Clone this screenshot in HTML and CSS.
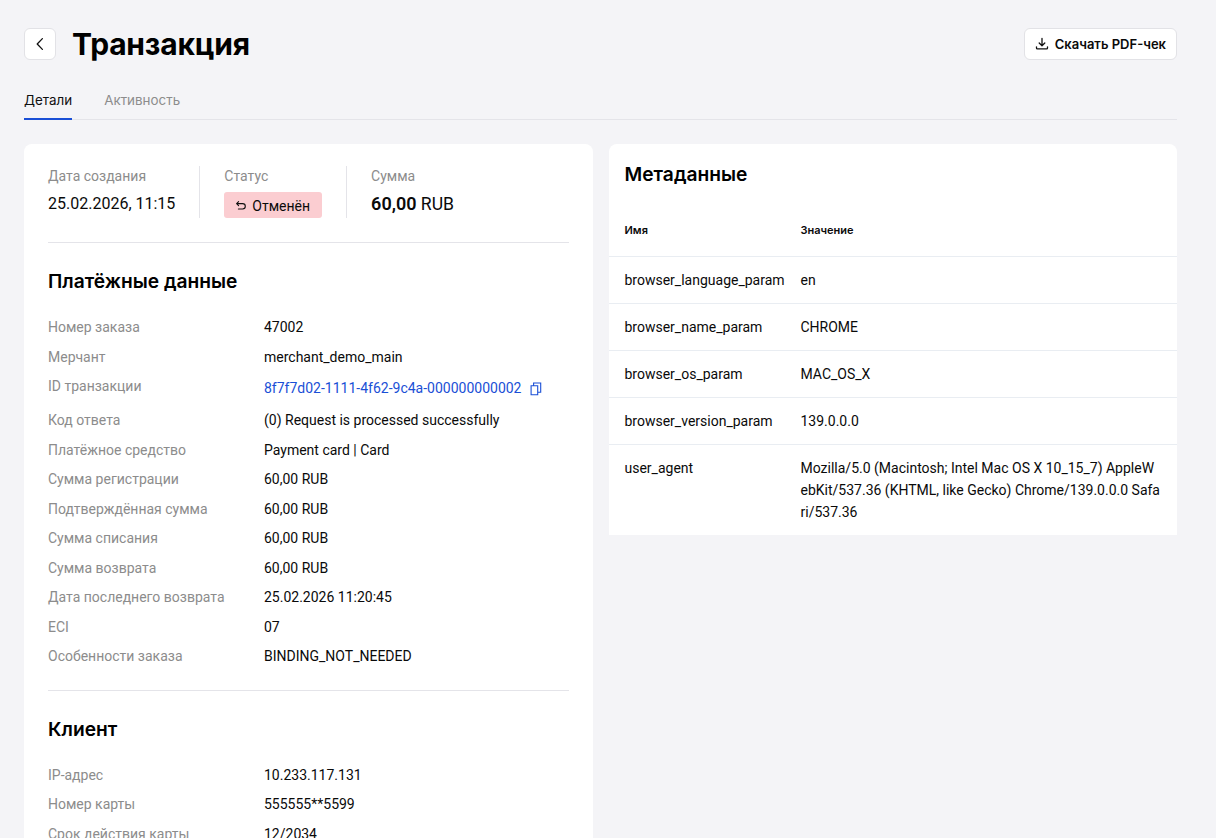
FILE: index.html
```html
<!DOCTYPE html>
<html lang="ru">
<head>
    <meta charset="UTF-8">
    <title>Транзакция</title>
    <meta name="viewport" content="width=device-width, initial-scale=1">
    <link rel="stylesheet" href="styles.css">
</head>
<body>
    <div class="page">
        <header class="page-head">
            <div class="head-left">
                <button class="back-btn" type="button" aria-label="Назад">
                    <svg width="16" height="16" viewBox="0 0 16 16" fill="none"><path d="M10.4 2.6 5.2 8l5.2 5.4" stroke="#111" stroke-width="1.3" stroke-linecap="round" stroke-linejoin="round"/></svg>
                </button>
                <h1>Транзакция</h1>
            </div>
            <button class="pdf-btn" type="button">
                <svg width="14" height="14" viewBox="0 0 14 14" fill="none"><path d="M7 1.5v7.2M4.2 6 7 8.8 9.8 6M1.5 9.8v1.1c0 .5.4.9.9.9h9.2c.5 0 .9-.4.9-.9V9.8" stroke="#111" stroke-width="1.3" stroke-linecap="round" stroke-linejoin="round"/></svg>
                Скачать PDF-чек
            </button>
        </header>

        <nav class="tabs">
            <a class="tab active">Детали</a>
            <a class="tab">Активность</a>
        </nav>

        <div class="columns">
            <section class="card details">
                <div class="summary">
                    <div class="summary-item">
                        <div class="summary-label">Дата создания</div>
                        <div class="summary-value">25.02.2026, 11:15</div>
                    </div>
                    <div class="summary-item">
                        <div class="summary-label">Статус</div>
                        <span class="status">
                            <svg width="12" height="12" viewBox="0 0 12 12" fill="none"><path d="M1.6 3.6h6a2.7 2.7 0 0 1 0 5.4H3.4M3.6 1.6 1.6 3.6l2 2" stroke="#111" stroke-width="1.1" stroke-linecap="round" stroke-linejoin="round"/></svg>
                            Отменён
                        </span>
                    </div>
                    <div class="summary-item">
                        <div class="summary-label">Сумма</div>
                        <div class="summary-value amount"><b>60,00</b> RUB</div>
                    </div>
                </div>

                <h2>Платёжные данные</h2>
                <dl class="fields">
                    <dt>Номер заказа</dt><dd>47002</dd>
                    <dt>Мерчант</dt><dd>merchant_demo_main</dd>
                    <dt class="tall">ID транзакции</dt>
                    <dd class="tall">
                        <a class="link">8f7f7d02-1111-4f62-9c4a-000000000002</a>
                        <svg class="copy-icon" width="12" height="14" viewBox="0 0 12 14" fill="none"><path d="M1.1 3.8h6.6v9H1.1zM3.6 3.6V1h7.1v9.2H7.9" stroke="#1a4fd6" stroke-width="1.1"/></svg>
                    </dd>
                    <dt>Код ответа</dt><dd>(0) Request is processed successfully</dd>
                    <dt>Платёжное средство</dt><dd>Payment card | Card</dd>
                    <dt>Сумма регистрации</dt><dd>60,00 RUB</dd>
                    <dt>Подтверждённая сумма</dt><dd>60,00 RUB</dd>
                    <dt>Сумма списания</dt><dd>60,00 RUB</dd>
                    <dt>Сумма возврата</dt><dd>60,00 RUB</dd>
                    <dt>Дата последнего возврата</dt><dd>25.02.2026 11:20:45</dd>
                    <dt>ECI</dt><dd>07</dd>
                    <dt>Особенности заказа</dt><dd>BINDING_NOT_NEEDED</dd>
                </dl>

                <hr class="divider">

                <h2>Клиент</h2>
                <dl class="fields">
                    <dt>IP-адрес</dt><dd>10.233.117.131</dd>
                    <dt>Номер карты</dt><dd>555555**5599</dd>
                    <dt>Срок действия карты</dt><dd>12/2034</dd>
                </dl>
            </section>

            <section class="card meta">
                <h2>Метаданные</h2>
                <table>
                    <thead>
                        <tr><th>Имя</th><th>Значение</th></tr>
                    </thead>
                    <tbody>
                        <tr><td>browser_language_param</td><td>en</td></tr>
                        <tr><td>browser_name_param</td><td>CHROME</td></tr>
                        <tr><td>browser_os_param</td><td>MAC_OS_X</td></tr>
                        <tr><td>browser_version_param</td><td>139.0.0.0</td></tr>
                        <tr><td>user_agent</td><td>Mozilla/5.0 (Macintosh; Intel Mac OS X 10_15_7) AppleWebKit/537.36 (KHTML, like Gecko) Chrome/139.0.0.0 Safari/537.36</td></tr>
                    </tbody>
                </table>
            </section>
        </div>
    </div>
</body>
</html>
```

FILE: styles.css
```css
html, body {
    height: 100%;
    overflow: hidden;
}
body {
    margin: 0;
    background: #f4f4f7;
    color: #0a0a0a;
    font-family: Roboto, "Liberation Sans", sans-serif;
    font-size: 14px;
    line-height: 20px;
}
.page {
    padding: 28px 39px 0 24px;
}
.page-head {
    display: flex;
    justify-content: space-between;
    align-items: flex-start;
}
.head-left {
    display: flex;
    align-items: center;
    gap: 16px;
}
.back-btn {
    width: 32px;
    height: 32px;
    padding: 0;
    display: flex;
    align-items: center;
    justify-content: center;
    background: #fff;
    border: 1px solid #e2e2e6;
    border-radius: 6px;
}
h1 {
    margin: 0;
    font-family: Inter, sans-serif;
    font-size: 30px;
    line-height: 32px;
    font-weight: 700;
    letter-spacing: -0.2px;
    color: #000;
}
.pdf-btn {
    height: 32px;
    padding: 0 10px;
    display: flex;
    align-items: center;
    gap: 6px;
    background: #fff;
    border: 1px solid #e2e2e6;
    border-radius: 6px;
    font-family: Inter, sans-serif;
    font-size: 13px;
    font-weight: 600;
    color: #0a0a0a;
}
.tabs {
    display: flex;
    gap: 32px;
    margin-top: 20px;
    border-bottom: 1px solid #e4e4e9;
}
.tab {
    padding: 10px 0 8px;
    margin-bottom: -1px;
    font-family: Inter, sans-serif;
    font-size: 13.4px;
    color: #8c8c8c;
    border-bottom: 2px solid transparent;
}
.tab.active {
    color: #111;
    border-bottom-color: #1a4fd6;
}
.columns {
    display: flex;
    align-items: flex-start;
    gap: 16px;
    margin-top: 24px;
}
.card {
    background: #fff;
    border-radius: 8px 8px 0 0;
}
.details {
    width: 569px;
    flex: none;
    padding: 22px 24px 24px;
    box-sizing: border-box;
}
.meta {
    flex: 1;
    padding-top: 16px;
}
h2 {
    margin: 0;
    font-family: Inter, sans-serif;
    font-size: 19.2px;
    line-height: 28px;
    font-weight: 600;
    color: #000;
}
.summary {
    display: flex;
    padding-bottom: 24px;
    border-bottom: 1px solid #e4e4e9;
}
.summary-item {
    padding: 0 24px;
    border-left: 1px solid #e4e4e9;
}
.summary-item:first-child {
    padding-left: 0;
    border-left: none;
}
.summary-label {
    color: #8c8c8c;
    margin-bottom: 6px;
}
.summary-value {
    font-size: 16px;
    line-height: 24px;
}
.summary-value.amount {
    font-size: 17.6px;
}
.summary-value b {
    font-size: 18px;
    font-weight: 600;
}
.status {
    display: inline-flex;
    align-items: center;
    gap: 5px;
    height: 26px;
    box-sizing: border-box;
    padding: 1px 12px 0 11px;
    background: #fbcdd1;
    border-radius: 3px;
}
.details h2 {
    margin-top: 24px;
}
.fields {
    display: grid;
    grid-template-columns: 216px 1fr;
    row-gap: 9.5px;
    margin: 22px 0 0;
}
.fields dt {
    color: #8c8c8c;
}
.fields dd {
    margin: 0;
}
.fields dd.tall {
    display: flex;
    align-items: center;
    gap: 8px;
    height: 24.5px;
}
.copy-icon {
    margin-top: 2px;
}
.link {
    color: #1a4fd6;
}
.divider {
    margin: 23.5px 0 0;
    border: none;
    border-top: 1px solid #e4e4e9;
}
.meta h2 {
    padding: 0 15.5px;
}
table {
    width: 100%;
    margin-top: 16px;
    border-collapse: collapse;
    table-layout: fixed;
}
th, td {
    padding: 12px 16px 12px 15.5px;
    line-height: 22px;
    text-align: left;
    vertical-align: top;
    border-bottom: 1px solid #e9edf2;
    word-break: break-all;
}
th {
    padding-top: 16px;
    padding-bottom: 16px;
    line-height: 20px;
    font-family: Inter, sans-serif;
    font-size: 11px;
    font-weight: 600;
}
th:first-child, td:first-child {
    width: 160.5px;
    padding-right: 0;
    white-space: nowrap;
}
tbody tr:last-child td {
    border-bottom: none;
}
```
